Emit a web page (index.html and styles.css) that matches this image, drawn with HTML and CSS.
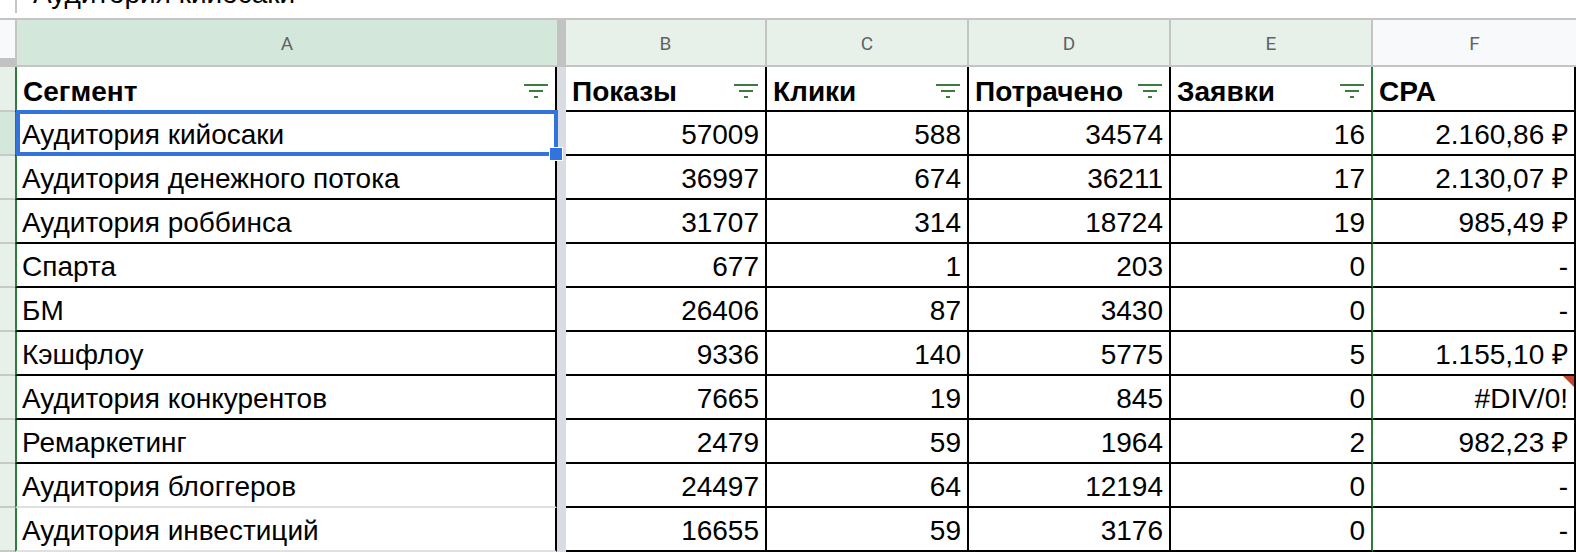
FILE: index.html
```html
<!DOCTYPE html>
<html lang="ru">
<head>
<meta charset="utf-8">
<title>Сегменты</title>
<link rel="stylesheet" href="styles.css">
</head>
<body>
<div class="sheet">
  <div class="fbar">
    <div class="fbar-sep"></div>
    <div class="fbar-text">Аудитория кийосаки</div>
  </div>
  <div class="grid">
    <div class="corner"></div>
    <div class="ch ch-a">A</div>
    <div class="ch-fz"></div>
    <div class="ch ch-g">B</div>
    <div class="ch ch-g">C</div>
    <div class="ch ch-g">D</div>
    <div class="ch ch-g">E</div>
    <div class="ch ch-f">F</div>

    <div class="rh"></div>
    <div class="c a hd"><span>Сегмент</span><svg class="flt" viewBox="0 0 24 14" width="24" height="14"><rect x="0" y="0" width="24" height="2"/><rect x="5" y="6" width="14" height="2"/><rect x="10" y="12" width="4" height="2"/></svg></div>
    <div class="fz"></div>
    <div class="c hd"><span>Показы</span><svg class="flt" viewBox="0 0 24 14" width="24" height="14"><rect x="0" y="0" width="24" height="2"/><rect x="5" y="6" width="14" height="2"/><rect x="10" y="12" width="4" height="2"/></svg></div>
    <div class="c hd"><span>Клики</span><svg class="flt" viewBox="0 0 24 14" width="24" height="14"><rect x="0" y="0" width="24" height="2"/><rect x="5" y="6" width="14" height="2"/><rect x="10" y="12" width="4" height="2"/></svg></div>
    <div class="c hd"><span>Потрачено</span><svg class="flt" viewBox="0 0 24 14" width="24" height="14"><rect x="0" y="0" width="24" height="2"/><rect x="5" y="6" width="14" height="2"/><rect x="10" y="12" width="4" height="2"/></svg></div>
    <div class="c hd e"><span>Заявки</span><svg class="flt" viewBox="0 0 24 14" width="24" height="14"><rect x="0" y="0" width="24" height="2"/><rect x="5" y="6" width="14" height="2"/><rect x="10" y="12" width="4" height="2"/></svg></div>
    <div class="c hd f"><span>CPA</span></div>

    <div class="rh rh-sel"></div>
    <div class="c a">Аудитория кийосаки</div>
    <div class="fz"></div>
    <div class="c num">57009</div><div class="c num">588</div><div class="c num">34574</div><div class="c num e">16</div><div class="c num f">2.160,86 ₽</div>

    <div class="rh"></div>
    <div class="c a">Аудитория денежного потока</div>
    <div class="fz"></div>
    <div class="c num">36997</div><div class="c num">674</div><div class="c num">36211</div><div class="c num e">17</div><div class="c num f">2.130,07 ₽</div>

    <div class="rh"></div>
    <div class="c a">Аудитория роббинса</div>
    <div class="fz"></div>
    <div class="c num">31707</div><div class="c num">314</div><div class="c num">18724</div><div class="c num e">19</div><div class="c num f">985,49 ₽</div>

    <div class="rh"></div>
    <div class="c a">Спарта</div>
    <div class="fz"></div>
    <div class="c num">677</div><div class="c num">1</div><div class="c num">203</div><div class="c num e">0</div><div class="c num f">-</div>

    <div class="rh"></div>
    <div class="c a">БМ</div>
    <div class="fz"></div>
    <div class="c num">26406</div><div class="c num">87</div><div class="c num">3430</div><div class="c num e">0</div><div class="c num f">-</div>

    <div class="rh"></div>
    <div class="c a">Кэшфлоу</div>
    <div class="fz"></div>
    <div class="c num">9336</div><div class="c num">140</div><div class="c num">5775</div><div class="c num e">5</div><div class="c num f">1.155,10 ₽</div>

    <div class="rh"></div>
    <div class="c a">Аудитория конкурентов</div>
    <div class="fz"></div>
    <div class="c num">7665</div><div class="c num">19</div><div class="c num">845</div><div class="c num e">0</div><div class="c num f err">#DIV/0!</div>

    <div class="rh"></div>
    <div class="c a">Ремаркетинг</div>
    <div class="fz"></div>
    <div class="c num">2479</div><div class="c num">59</div><div class="c num">1964</div><div class="c num e">2</div><div class="c num f">982,23 ₽</div>

    <div class="rh"></div>
    <div class="c a light">Аудитория блоггеров</div>
    <div class="fz"></div>
    <div class="c num">24497</div><div class="c num">64</div><div class="c num">12194</div><div class="c num e">0</div><div class="c num f">-</div>

    <div class="rh"></div>
    <div class="c a light">Аудитория инвестиций</div>
    <div class="fz"></div>
    <div class="c num">16655</div><div class="c num">59</div><div class="c num">3176</div><div class="c num e">0</div><div class="c num f">-</div>
  </div>
  <div class="selection"><div class="handle"></div></div>
</div>
</body>
</html>
```

FILE: styles.css
```css
html, body {
  margin: 0;
  padding: 0;
  background: #ffffff;
}

body {
  font-family: "Liberation Sans", Arial, sans-serif;
  color: #000;
}

.sheet {
  position: relative;
  width: 1576px;
  height: 552px;
  overflow: hidden;
}

.fbar {
  height: 18px;
  border-bottom: 2px solid #c4c4c4;
  display: flex;
  overflow: hidden;
}

.fbar-sep {
  width: 2px;
  height: 13px;
  background: #c4c4c4;
  margin-left: 15px;
  flex: none;
}

.fbar-text {
  font-size: 28px;
  line-height: 30px;
  margin-top: -21px;
  margin-left: 16px;
  white-space: nowrap;
}

.grid {
  display: grid;
  grid-template-columns: 15px 542px 9px 201px 202px 202px 202px 203px;
  grid-template-rows: 47px 45px repeat(10, 44px);
}

.corner {
  background: linear-gradient(#f8f9fa 0 38px, #c2c2c2 38px 47px);
}

.ch {
  box-sizing: border-box;
  border-bottom: 2px solid #c4c4c4;
  border-right: 2px solid #c4c4c4;
  display: flex;
  align-items: center;
  justify-content: center;
  font-family: Roboto, "Liberation Sans", Arial, sans-serif;
  font-size: 19px;
  color: #5f6368;
  padding-top: 1px;
}

.ch-a {
  background: #d3e8da;
  border-left: 2px solid #c4c4c4;
  border-right: none;
}

.ch-fz {
  background: #c2c2c2;
}

.ch-g {
  background: #e7f1ea;
}

.ch-f {
  background: #f8f9fa;
  border-right: none;
}

.rh {
  box-sizing: border-box;
  background: #e7f1ea;
  border-bottom: 2px solid #c8c8c8;
}

.rh-sel {
  background: #d3e8da;
}

.fz {
  background: #dadce4;
}

.c {
  box-sizing: border-box;
  border-bottom: 2px solid #000;
  border-right: 2px solid #000;
  display: flex;
  align-items: flex-end;
  padding: 0 6px 4px 6px;
  font-size: 28px;
  line-height: 30px;
  white-space: nowrap;
  overflow: hidden;
  position: relative;
}

.a {
  border-left: 2px solid #2f7d3a;
  padding-left: 5px;
}

.light {
  border-bottom-color: #e0e0e0;
}

.hd {
  font-weight: bold;
  justify-content: space-between;
  padding-bottom: 3px;
  padding-left: 6px;
}

.a.hd {
  padding-left: 6px;
}

.flt {
  fill: #3a7d3f;
  flex: none;
  margin-bottom: 9px;
  margin-right: 1px;
}

.num {
  justify-content: flex-end;
}

.e {
  border-right-color: #2f7d3a;
}

.err::after {
  content: "";
  position: absolute;
  top: 0;
  right: 0;
  width: 0;
  height: 0;
  border-top: 11px solid #c4432c;
  border-left: 11px solid transparent;
}

.selection {
  position: absolute;
  left: 16px;
  top: 110px;
  width: 542px;
  height: 46px;
  box-sizing: border-box;
  border: 4px solid #3273dc;
}

.handle {
  position: absolute;
  left: 529px;
  top: 33px;
  width: 12px;
  height: 12px;
  background: #3273dc;
  border: 1px solid #ffffff;
}
```
